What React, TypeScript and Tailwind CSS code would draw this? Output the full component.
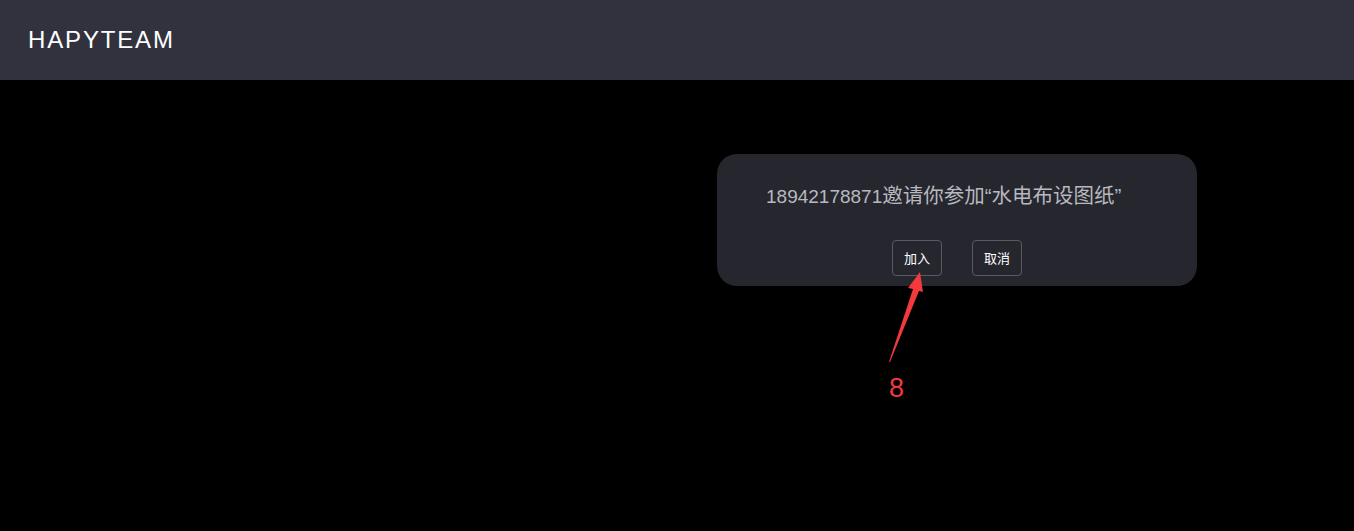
const Header = () => (
  <header className="h-[80px] bg-[#32323e] flex items-center px-[28px]">
    <h1 className="text-[24px] leading-none tracking-[1.85px] text-white font-['Liberation_Sans',Arial,sans-serif]">
      HAPYTEAM
    </h1>
  </header>
);

const InviteDialog = () => (
  <div className="ml-[717px] mt-[74px] w-[480px] h-[132px] rounded-[20px] bg-[#26262e] flex flex-col">
    <p className="pl-[49px] pt-[29px] text-[19px] leading-[26px] text-[#b6b9bf] font-['Liberation_Sans','Noto_Sans_CJK_SC',sans-serif]">
      18942178871
      <span className="text-[20.5px]">邀请你参加“水电布设图纸”</span>
    </p>
    <div className="flex justify-center gap-[30px] mt-[30px]">
      <button className="w-[50px] h-[36px] rounded-[4px] border border-[#5a5a62] text-[13px] text-white font-['Noto_Sans_CJK_SC',sans-serif]">
        加入
      </button>
      <button className="w-[50px] h-[36px] rounded-[4px] border border-[#5a5a62] text-[13px] text-white font-['Noto_Sans_CJK_SC',sans-serif]">
        取消
      </button>
    </div>
  </div>
);

const Annotation = () => (
  <div className="absolute left-0 top-0 pointer-events-none">
    <svg width="1354" height="531" className="absolute left-0 top-0">
      <polygon points="920,272 923,292 919,291 890,362 889,362 913,289 908,288" fill="#f2393c" />
    </svg>
    <span className="absolute left-[889px] top-[372px] text-[27px] leading-[32px] text-[#f2393c] font-['Liberation_Sans',sans-serif]">
      8
    </span>
  </div>
);

export default function App() {
  return (
    <div className="relative w-[1354px] h-[531px] bg-black overflow-hidden">
      <Header />
      <InviteDialog />
      <Annotation />
    </div>
  );
}
